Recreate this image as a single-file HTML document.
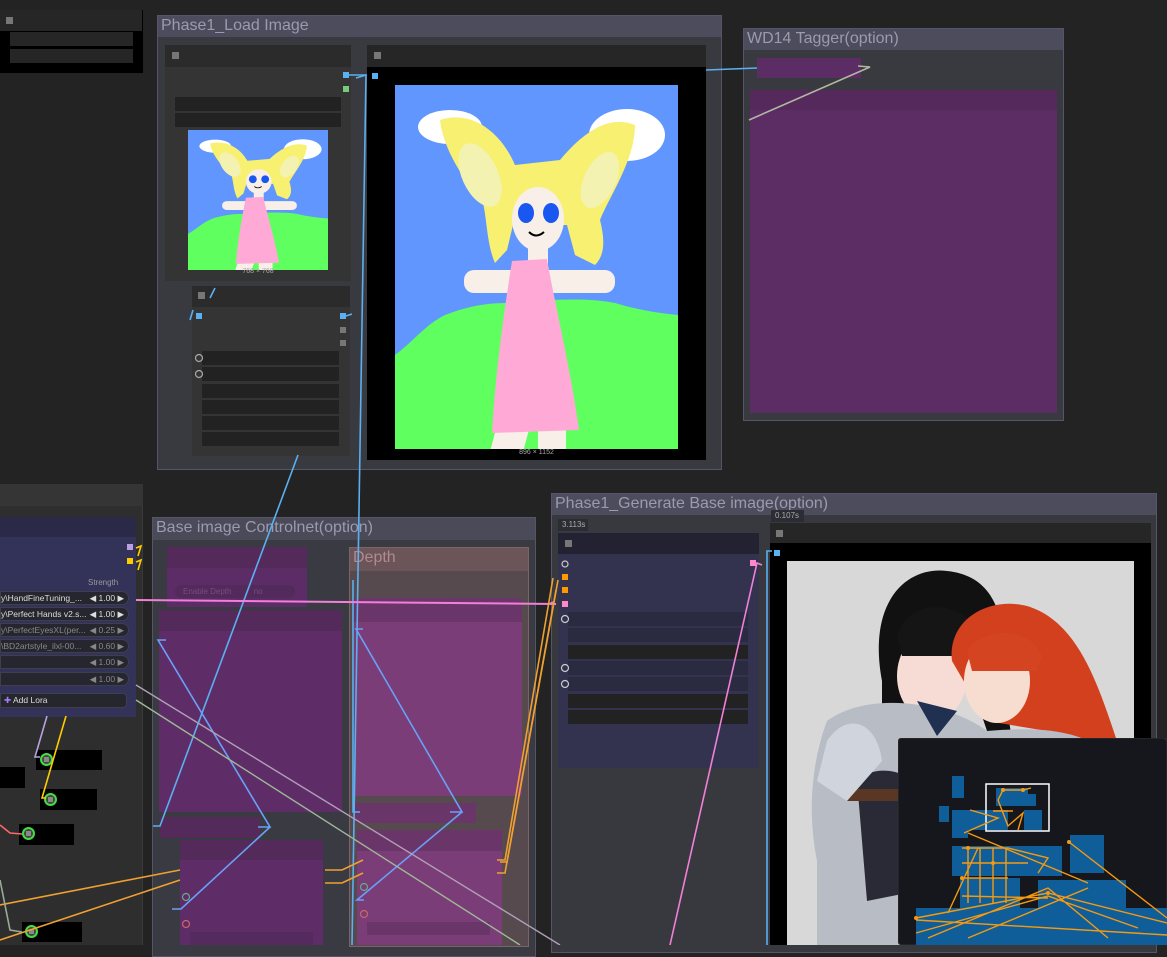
<!DOCTYPE html>
<html><head><meta charset="utf-8"><style>
*{margin:0;padding:0;box-sizing:border-box}
body{width:1167px;height:945px;overflow:hidden;background:#232323;font-family:"Liberation Sans",sans-serif;position:relative}
.a{position:absolute}
.gt{position:absolute;color:#9a9ab0;font-size:16px;left:3px;top:1px;white-space:nowrap}
.sq{position:absolute;width:7px;height:7px;background:#777}
.row{position:absolute;background:#222;height:14px}
.pill{position:absolute;left:0;width:129px;height:14px;background:#26262e;border-radius:0 8px 8px 0;border:1px solid #3e3e50;font-size:8.5px;color:#ddd;line-height:12px;white-space:nowrap;overflow:hidden}
.pill .v{position:absolute;right:4px;top:0}
.dim{color:#888}
.blk{position:absolute;background:#000}
.gc{position:absolute;width:13px;height:13px;border:2px solid #4d4;border-radius:50%;background:#444}
.gc:after{content:"";position:absolute;left:2px;top:2px;width:5px;height:5px;background:#888}
</style></head><body>
<div class="a" style="left:0;top:10px;width:143px;height:63px;background:#000"></div>
<div class="a" style="left:0;top:10px;width:142px;height:21px;background:#262626"></div>
<div class="sq" style="left:6px;top:17px"></div>
<div class="a" style="left:10px;top:32px;width:123px;height:14px;background:#262626"></div>
<div class="a" style="left:10px;top:49px;width:123px;height:14px;background:#262626"></div>

<div class="a" style="left:157px;top:15px;width:565px;height:455px;background:#393940;border:1px solid #55556a"></div>
<div class="a" style="left:158px;top:16px;width:563px;height:21px;background:#4c4c5c"><div class="gt">Phase1_Load Image</div></div>
<div class="a" style="left:165px;top:45px;width:186px;height:236px;background:#343434"></div>
<div class="a" style="left:165px;top:45px;width:186px;height:22px;background:#2b2b2b"></div>
<div class="sq" style="left:172px;top:52px"></div>
<div class="a" style="left:343px;top:72px;width:6px;height:6px;background:#5ab0f0"></div>
<div class="a" style="left:343px;top:86px;width:6px;height:6px;background:#7c7"></div>
<div class="row" style="left:175px;top:97px;width:166px"></div>
<div class="row" style="left:175px;top:113px;width:166px"></div>
<svg class="a" style="left:188px;top:130px" width="140" height="140" viewBox="0 0 283 364" preserveAspectRatio="none"><use href="#girl"/></svg>
<div class="a" style="left:188px;top:268px;width:140px;text-align:center;font-size:7px;color:#aaa">768 × 768</div>

<div class="a" style="left:192px;top:286px;width:158px;height:170px;background:#343434"></div>
<div class="a" style="left:192px;top:286px;width:158px;height:21px;background:#2b2b2b"></div>
<div class="sq" style="left:198px;top:292px"></div>
<div class="a" style="left:196px;top:313px;width:6px;height:6px;background:#5ab0f0"></div>
<div class="a" style="left:340px;top:313px;width:6px;height:6px;background:#5ab0f0"></div>
<div class="a" style="left:340px;top:327px;width:6px;height:6px;background:#777"></div>
<div class="a" style="left:340px;top:340px;width:6px;height:6px;background:#777"></div>
<div class="row" style="left:202px;top:351px;width:137px"></div>
<div class="row" style="left:202px;top:367px;width:137px"></div>
<div class="row" style="left:202px;top:384px;width:137px"></div>
<div class="row" style="left:202px;top:400px;width:137px"></div>
<div class="row" style="left:202px;top:416px;width:137px"></div>
<div class="row" style="left:202px;top:432px;width:137px"></div>

<div class="a" style="left:367px;top:45px;width:339px;height:415px;background:#000"></div>
<div class="a" style="left:367px;top:45px;width:339px;height:22px;background:#262626"></div>
<div class="sq" style="left:374px;top:52px"></div>
<div class="a" style="left:372px;top:73px;width:6px;height:6px;background:#5ab0f0"></div>
<svg class="a" style="left:395px;top:85px" width="283" height="364" viewBox="0 0 283 364">
<defs><g id="girl">
<rect width="283" height="364" fill="#6096fd"/>
<path d="M0 280 L0 270 C20 255 30 240 50 230 C70 222 90 218 110 218 C150 215 190 212 220 218 C240 224 260 228 283 230 L283 364 L0 364Z" fill="#5fff60"/>
<ellipse cx="55" cy="42" rx="32" ry="17" fill="#fff"/>
<ellipse cx="232" cy="50" rx="38" ry="26" fill="#fff"/>
<path d="M45 35 C75 25 105 45 120 80 L165 75 C190 45 215 30 240 40 C240 75 215 110 205 135 C210 155 210 170 200 180 L180 170 L172 140 L118 140 L112 165 L100 178 C92 160 92 135 88 118 C65 90 48 62 45 35Z" fill="#f8f070"/>
<ellipse cx="85" cy="90" rx="18" ry="34" fill="#f4f2b0" transform="rotate(-25 85 90)"/>
<ellipse cx="205" cy="95" rx="16" ry="30" fill="#f4f2b0" transform="rotate(25 205 95)"/>
<ellipse cx="143" cy="134" rx="26" ry="32" fill="#f8f0e8"/>
<ellipse cx="131" cy="128" rx="8" ry="10" fill="#1a56f0"/><ellipse cx="156" cy="128" rx="8" ry="10" fill="#1a56f0"/>
<path d="M134 147 Q141 154 149 147" stroke="#000" stroke-width="2" fill="none"/>
<rect x="133" y="160" width="20" height="20" fill="#f8f0e8"/>
<rect x="69" y="185" width="151" height="23" rx="10" fill="#f8f0e8"/>
<rect x="100" y="330" width="32" height="50" rx="10" fill="#f8f0e8" transform="rotate(15 116 350)"/>
<rect x="143" y="330" width="28" height="40" rx="8" fill="#f8f0e8"/>
<path d="M117 176 L152 174 C160 220 175 280 184 345 L97 348 C100 290 110 220 117 176Z" fill="#ffaad6"/>
</g></defs><use href="#girl"/></svg>
<div class="a" style="left:367px;top:449px;width:339px;text-align:center;font-size:7px;color:#aaa">896 × 1152</div>

<div class="a" style="left:743px;top:28px;width:321px;height:393px;background:#393940;border:1px solid #55556a"></div>
<div class="a" style="left:744px;top:29px;width:319px;height:21px;background:#4c4c5c"><div class="gt">WD14 Tagger(option)</div></div>
<div class="a" style="left:757px;top:58px;width:104px;height:20px;background:#5c2c64"></div>
<div class="a" style="left:750px;top:90px;width:307px;height:323px;background:#5c2c64"></div>
<div class="a" style="left:750px;top:90px;width:307px;height:20px;background:#55295c"></div>

<div class="a" style="left:0;top:484px;width:143px;height:461px;background:#2e2e2e;border-right:1px solid #3a3a3a"></div>
<div class="a" style="left:0;top:484px;width:143px;height:22px;background:#353535"></div>
<div class="a" style="left:0;top:517px;width:136px;height:200px;background:#33335a"></div>
<div class="a" style="left:0;top:517px;width:136px;height:20px;background:#2a2a48"></div>
<div class="a" style="left:127px;top:544px;width:6px;height:6px;background:#b9a0e0"></div>
<div class="a" style="left:127px;top:558px;width:6px;height:6px;background:#fc0"></div>
<div class="a" style="left:88px;top:578px;font-size:8px;color:#999">Strength</div>
<div class="pill" style="top:591px">y\HandFineTuning_...<span class="v">◀ 1.00 ▶</span></div>
<div class="pill" style="top:607px">y\Perfect Hands v2.s...<span class="v">◀ 1.00 ▶</span></div>
<div class="pill dim" style="top:623px">y\PerfectEyesXL(per...<span class="v">◀ 0.25 ▶</span></div>
<div class="pill dim" style="top:639px">\BD2artstyle_ilxl-00...<span class="v">◀ 0.60 ▶</span></div>
<div class="pill dim" style="top:655px"><span class="v">◀ 1.00 ▶</span></div>
<div class="pill dim" style="top:672px"><span class="v">◀ 1.00 ▶</span></div>
<div class="a" style="left:0;top:693px;width:127px;height:15px;background:#26262e;border:1px solid #3e3e50;border-radius:0 4px 4px 0;font-size:8.5px;color:#ddd;line-height:13px;padding-left:3px"><span style="color:#a080f0">✚</span> Add Lora</div>
<div class="blk" style="left:36px;top:750px;width:66px;height:20px"></div><div class="gc" style="left:40px;top:753px"></div>
<div class="blk" style="left:40px;top:789px;width:57px;height:21px"></div><div class="gc" style="left:44px;top:793px"></div>
<div class="blk" style="left:19px;top:824px;width:55px;height:21px"></div><div class="gc" style="left:22px;top:827px"></div>
<div class="blk" style="left:0;top:767px;width:25px;height:21px"></div>
<div class="blk" style="left:22px;top:922px;width:60px;height:20px"></div><div class="gc" style="left:25px;top:925px"></div>

<div class="a" style="left:152px;top:517px;width:384px;height:440px;background:#3a3a42;border:1px solid #55556a"></div>
<div class="a" style="left:153px;top:518px;width:382px;height:22px;background:#4a4a58"><div class="gt">Base image Controlnet(option)</div></div>
<div class="a" style="left:167px;top:547px;width:140px;height:60px;background:#5c2c66"></div>
<div class="a" style="left:167px;top:547px;width:140px;height:21px;background:#532a5a"></div>
<div class="a" style="left:175px;top:585px;width:120px;height:13px;background:#532a5c;border-radius:7px;font-size:8px;color:#7a4a80;padding-left:8px;line-height:13px">Enable Depth&nbsp;&nbsp;&nbsp;&nbsp;&nbsp;&nbsp;&nbsp;&nbsp;&nbsp;&nbsp;no</div>
<div class="a" style="left:159px;top:610px;width:183px;height:202px;background:#5e2d68"></div>
<div class="a" style="left:159px;top:610px;width:183px;height:21px;background:#532a5a"></div>
<div class="a" style="left:160px;top:817px;width:100px;height:21px;background:#532a5a"></div>
<div class="a" style="left:180px;top:840px;width:143px;height:105px;background:#5e2d68"></div>
<div class="a" style="left:180px;top:840px;width:143px;height:20px;background:#532a5a"></div>
<div class="a" style="left:190px;top:932px;width:123px;height:13px;background:#552a5e"></div>

<div class="a" style="left:349px;top:547px;width:180px;height:400px;background:#564a4e;border:1px solid #7a6466"></div>
<div class="a" style="left:350px;top:548px;width:178px;height:23px;background:#6b5558"><div class="gt" style="color:#b08a90">Depth</div></div>
<div class="a" style="left:354px;top:598px;width:168px;height:198px;background:#7a3d78"></div>
<div class="a" style="left:354px;top:598px;width:168px;height:24px;background:#6a3568"></div>
<div class="a" style="left:354px;top:803px;width:122px;height:20px;background:#6a3568"></div>
<div class="a" style="left:357px;top:830px;width:145px;height:115px;background:#7a3d78"></div>
<div class="a" style="left:357px;top:830px;width:145px;height:21px;background:#6a3568"></div>
<div class="a" style="left:367px;top:922px;width:123px;height:13px;background:#6a3568"></div>

<div class="a" style="left:551px;top:493px;width:606px;height:460px;background:#38383f;border:1px solid #55556a"></div>
<div class="a" style="left:552px;top:494px;width:604px;height:21px;background:#4c4c5c"><div class="gt">Phase1_Generate Base image(option)</div></div>
<div class="a" style="left:558px;top:519px;width:30px;height:12px;background:#2c2c34;font-size:8px;color:#aaa;padding-left:4px;line-height:12px">3.113s</div>
<div class="a" style="left:558px;top:533px;width:201px;height:235px;background:#33334f"></div>
<div class="a" style="left:558px;top:533px;width:201px;height:21px;background:#222232"></div>
<div class="sq" style="left:565px;top:540px"></div>
<div class="a" style="left:562px;top:574px;width:6px;height:6px;background:#f90"></div>
<div class="a" style="left:562px;top:587px;width:6px;height:6px;background:#f90"></div>
<div class="a" style="left:562px;top:601px;width:6px;height:6px;background:#f8c"></div>
<div class="a" style="left:750px;top:560px;width:6px;height:6px;background:#f8c"></div>
<div class="row" style="left:568px;top:612px;width:180px;background:#2a2a40"></div>
<div class="row" style="left:568px;top:628px;width:180px;background:#2a2a40"></div>
<div class="row" style="left:568px;top:645px;width:180px"></div>
<div class="row" style="left:568px;top:661px;width:180px;background:#2a2a40"></div>
<div class="row" style="left:568px;top:677px;width:180px;background:#2a2a40"></div>
<div class="row" style="left:568px;top:694px;width:180px"></div>
<div class="row" style="left:568px;top:710px;width:180px"></div>

<div class="a" style="left:771px;top:510px;width:33px;height:12px;background:#2c2c34;font-size:8px;color:#aaa;padding-left:4px;line-height:12px">0.107s</div>
<div class="a" style="left:770px;top:523px;width:381px;height:422px;background:#000"></div>
<div class="a" style="left:770px;top:523px;width:381px;height:20px;background:#262626"></div>
<div class="sq" style="left:776px;top:530px"></div>
<div class="a" style="left:774px;top:550px;width:6px;height:6px;background:#5ab0f0"></div>
<svg class="a" style="left:787px;top:561px" width="347" height="384" viewBox="0 0 347 384">
<rect width="347" height="384" fill="#d8d8d8"/>
<path d="M95 120 C80 40 120 5 160 10 C210 15 220 60 215 110 L225 180 L200 170 L180 110 L130 110 L115 200 L95 260Z" fill="#111"/>
<ellipse cx="145" cy="115" rx="35" ry="45" fill="#f6dcd4"/>
<path d="M110 75 C120 40 170 35 190 70 L185 95 L115 95Z" fill="#151515"/>
<path d="M165 100 C160 60 200 35 240 45 C290 60 310 120 330 180 L310 200 L260 170 L200 160Z" fill="#d2401e"/>
<ellipse cx="210" cy="120" rx="33" ry="42" fill="#f7ddd0"/>
<path d="M180 90 C190 70 240 60 255 95 L250 110 L185 110Z" fill="#d44420"/>
<path d="M40 160 C80 130 160 140 200 170 C260 165 300 170 330 200 L347 384 L30 384 L30 300 C20 250 25 200 40 160Z" fill="#b8bcc4"/>
<path d="M70 220 C90 200 130 210 140 240 L130 330 L80 340Z" fill="#2a2a36"/>
<rect x="60" y="228" width="60" height="12" fill="#5a3624"/>
<path d="M40 180 C60 150 90 160 95 200 L60 240 L30 220Z" fill="#d0d4dc"/>
<path d="M130 140 L170 150 L150 175Z" fill="#203050"/>
</svg>

<svg class="a" style="left:0;top:0" width="1167" height="945">
<g fill="none" stroke-width="1.6">
<path d="M706 70 L757 68" stroke="#5ab0f0"/>
<path d="M749 120 L870 67 L858 66" stroke="#b0b8a0"/>
<path d="M356 78 L366 75 L352 945" stroke="#5ab0f0"/>
<path d="M349 75 L366 75" stroke="#5ab0f0"/>
<path d="M298 455 L160 826 L153 826" stroke="#5ab0f0"/>
<path d="M190 320 L193 310" stroke="#5ab0f0"/>
<path d="M215 288 L210 298" stroke="#5ab0f0"/>
<path d="M346 316 L352 314" stroke="#5ab0f0"/>
<path d="M166 640 L158 640 L270 827 L258 827 M270 827 L181 909 L172 909" stroke="#6aa0f8"/>
<path d="M363 629 L356 629 L462 812 L450 812 M462 812 L357 900 L364 900" stroke="#6aa0f8"/>
<path d="M353 580 L353 812 L360 812" stroke="#5ab0f0"/>
<path d="M136 600 L556 604" stroke="#f080d8" stroke-width="2"/>
<path d="M549 604 L553 602" stroke="#f080d8"/>
<path d="M762 565 L757 563 L670 945" stroke="#f080d8"/>
<path d="M772 551 L767 551 L767 945" stroke="#5ab0f0"/>
<path d="M136 685 L560 945" stroke="#b0a0b8" stroke-width="1.4"/>
<path d="M136 700 L520 945" stroke="#a0b898" stroke-width="1.4"/>
<path d="M0 905 L180 870 M0 940 L180 880" stroke="#f0a030" stroke-width="1.6"/>
<path d="M325 870 L342 870 L363 860 M325 883 L342 883 L363 873" stroke="#f0a030"/>
<path d="M497 860 L505 860 L553 578 M497 873 L505 873 L556 590" stroke="#f0a030"/>
<path d="M500 862 L507 862 L558 580" stroke="#f0a030"/>
<path d="M47 716 L35 757 L40 757" stroke="#b9a0e0"/>
<path d="M66 716 L42 798 L46 798" stroke="#fc0"/>
<path d="M0 825 L10 833 L22 834" stroke="#f66"/>
<path d="M0 880 L10 930 L22 932" stroke="#9a9"/>
<path d="M136 548 L141 546 L138 556 M136 562 L141 560 L138 570" stroke="#fc0"/>
</g>
<g stroke-width="1.2" fill="none">
<circle cx="186" cy="897" r="3.5" stroke="#6a8"/><circle cx="186" cy="924" r="3.5" stroke="#c66"/>
<circle cx="364" cy="887" r="3.5" stroke="#6a8"/><circle cx="364" cy="914" r="3.5" stroke="#c66"/>
<circle cx="565" cy="564" r="3" stroke="#ccc"/><circle cx="565" cy="619" r="3.5" stroke="#ccc"/>
<circle cx="565" cy="668" r="3.5" stroke="#ccc"/><circle cx="565" cy="684" r="3.5" stroke="#ccc"/>
<circle cx="199" cy="358" r="3.5" stroke="#aaa"/><circle cx="199" cy="374" r="3.5" stroke="#aaa"/>
</g>
</svg>

<svg class="a" style="left:898px;top:738px" width="269" height="207">
<rect width="269" height="207" rx="4" fill="#15171c" stroke="#333"/>
<g fill="#0f5e9a">
<rect x="54" y="38" width="12" height="22"/><rect x="41" y="68" width="10" height="16"/>
<rect x="98" y="50" width="32" height="18"/><rect x="126" y="56" width="12" height="12"/>
<rect x="70" y="72" width="40" height="20"/><rect x="126" y="72" width="18" height="20"/>
<rect x="54" y="72" width="16" height="28"/><rect x="172" y="97" width="34" height="38"/>
<rect x="54" y="108" width="110" height="30"/><rect x="62" y="140" width="60" height="30"/>
<rect x="140" y="142" width="88" height="28"/><rect x="18" y="170" width="251" height="37"/>
</g>
<rect x="88" y="46" width="63" height="47" fill="none" stroke="#fff" stroke-width="1.5"/>
<g stroke="#f59a10" stroke-width="1.4" fill="none">
<path d="M105 52 L125 52 L133 50 M105 52 L100 62 L110 88 L125 75 L120 92 M95 73 L115 73 M72 72 L100 80 L66 95"/>
<path d="M64 110 L110 110 L150 120 L140 135 M64 125 L130 125 M64 140 L110 140 M64 158 L150 160"/>
<path d="M70 110 L70 165 M82 110 L82 165 M95 110 L95 165 M108 110 L108 165"/>
<path d="M70 95 L190 145 M171 104 L269 180 M18 180 L150 155 L269 185 M18 195 L150 158 L240 190 M18 182 L269 197 M50 175 L80 110 M30 200 L150 150 L210 200 M70 200 L190 150"/>
</g>
<g fill="#f59a10"><circle cx="105" cy="52" r="2"/><circle cx="125" cy="52" r="2"/><circle cx="171" cy="104" r="2"/><circle cx="18" cy="180" r="2"/><circle cx="150" cy="155" r="2"/><circle cx="70" cy="110" r="2"/><circle cx="95" cy="125" r="2"/><circle cx="64" cy="140" r="2"/></g>
</svg>
</body></html>
